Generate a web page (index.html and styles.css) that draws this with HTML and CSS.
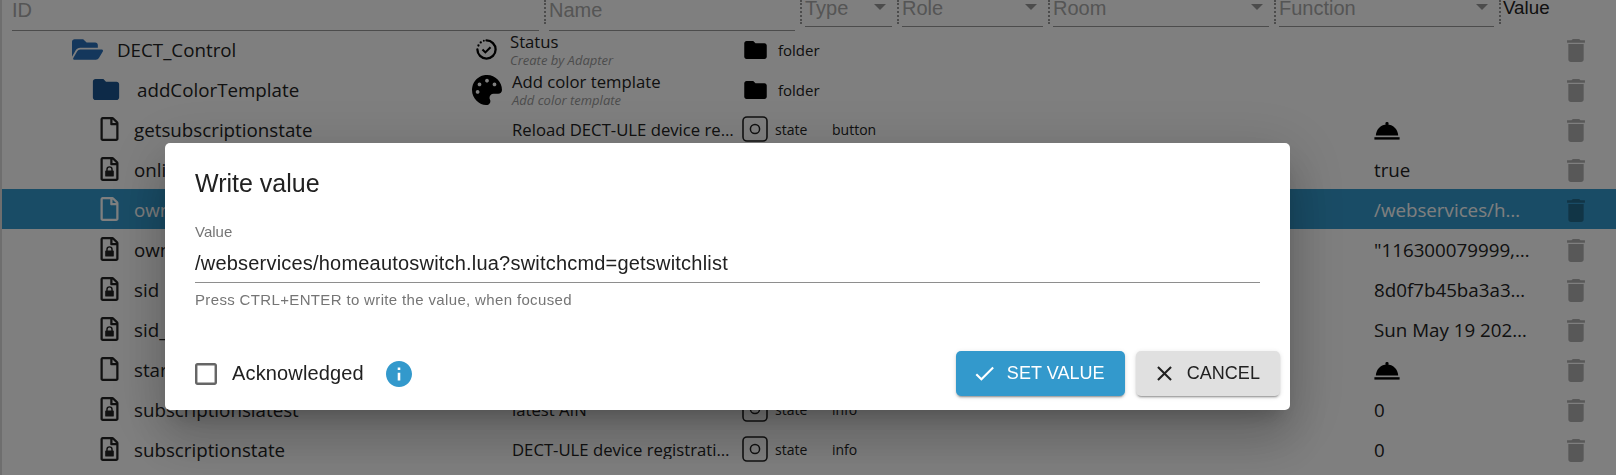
FILE: index.html
```html
<!DOCTYPE html>
<html lang="en">
<head>
<meta charset="UTF-8">
<title>Objects</title>
<link rel="stylesheet" href="styles.css">
</head>
<body>

<svg class="defs" xmlns="http://www.w3.org/2000/svg">
	<symbol id="i-folder" viewBox="2 4 20 16"><path d="M10 4H4c-1.1 0-1.99.9-1.99 2L2 18c0 1.1.9 2 2 2h16c1.1 0 2-.9 2-2V8c0-1.1-.9-2-2-2h-8l-2-2z"/></symbol>
	<symbol id="i-folder-open" viewBox="0 64 576 384"><path d="M572.694 292.093L500.27 416.248A63.997 63.997 0 0 1 444.989 448H45.025c-18.523 0-30.064-20.093-20.731-36.093l72.424-124.155A64 64 0 0 1 152 256h399.964c18.523 0 30.064 20.093 20.73 36.093zM152 224h328v-48c0-26.51-21.49-48-48-48H272l-64-64H48C21.49 64 0 85.49 0 112v278.046l69.077-118.418C86.214 242.25 117.989 224 152 224z"/></symbol>
	<symbol id="i-file" viewBox="0 0 384 512"><path d="M369.9 97.9L286 14C277 5 264.8-.1 252.1-.1H48C21.5 0 0 21.5 0 48v416c0 26.5 21.5 48 48 48h288c26.5 0 48-21.5 48-48V131.9c0-12.7-5.1-25-14.1-34zM332.1 128H256V51.9l76.1 76.1zM48 464V48h160v104c0 13.3 10.7 24 24 24h104v288H48z"/></symbol>
	<symbol id="i-file-lock" viewBox="0 0 384 512">
		<path d="M369.9 97.9L286 14C277 5 264.8-.1 252.1-.1H48C21.5 0 0 21.5 0 48v416c0 26.5 21.5 48 48 48h288c26.5 0 48-21.5 48-48V131.9c0-12.7-5.1-25-14.1-34zM332.1 128H256V51.9l76.1 76.1zM48 464V48h160v104c0 13.3 10.7 24 24 24h104v288H48z"/>
		<rect x="100" y="290" width="184" height="128" rx="18"/>
		<path d="M138 300v-36a54 54 0 0 1 108 0v36" fill="none" stroke="currentColor" stroke-width="30"/>
	</symbol>
	<symbol id="i-trash" viewBox="5 3 14 18"><path d="M6 19c0 1.1.9 2 2 2h8c1.1 0 2-.9 2-2V7H6v12zM19 4h-3.5l-1-1h-5l-1 1H5v2h14V4z"/></symbol>
	<symbol id="i-bell" viewBox="0 0 26 18">
		<rect x="11.4" y="0" width="3.2" height="3.5" rx="1.4"/>
		<path d="M1.8 13.6C2 7.2 7 2.4 13 2.4s11 4.8 11.2 11.2z"/>
		<rect x="0.4" y="15.2" width="25.2" height="2.4"/>
	</symbol>
	<symbol id="i-state" viewBox="0 0 26 26">
		<rect x="1" y="1" width="24" height="24" rx="4" fill="none" stroke="currentColor" stroke-width="1.6"/>
		<circle cx="13" cy="13" r="4.6" fill="none" stroke="currentColor" stroke-width="1.5"/>
	</symbol>
</svg>

<div class="page">
	<div class="head">
		<div class="hcell tall"><div class="field">ID</div></div>
		<div class="hcell tall"><div class="field">Name</div></div>
		<div class="hcell"><div class="field">Type<span class="arrow"></span></div></div>
		<div class="hcell"><div class="field">Role<span class="arrow"></span></div></div>
		<div class="hcell"><div class="field">Room<span class="arrow"></span></div></div>
		<div class="hcell"><div class="field">Function<span class="arrow"></span></div></div>
		<div class="hvalue">Value</div>
	</div>

	<div class="row">
		<div class="id lv1"><svg class="ic-open"><use href="#i-folder-open"/></svg><span>DECT_Control</span></div>
		<div class="name">
			<svg class="ic-name" viewBox="0 0 24 24">
				<path d="M12 2.5a9.5 9.5 0 1 1-9.5 9.5" fill="none" stroke="currentColor" stroke-width="2.4" stroke-linecap="round"/>
				<circle cx="3.6" cy="7.8" r="1.2"/><circle cx="6" cy="4.6" r="1.2"/><circle cx="9.2" cy="2.8" r="1"/>
				<path d="M7.8 12l3 3 5.4-5.4" fill="none" stroke="currentColor" stroke-width="2.2"/>
			</svg>
			<div class="two"><div>Status</div><div class="sub">Create by Adapter</div></div>
		</div>
		<div class="type"><svg class="ic-type"><use href="#i-folder"/></svg><span class="folder-t">folder</span></div>
		<div></div><div></div>
		<svg class="trash"><use href="#i-trash"/></svg>
	</div>

	<div class="row">
		<div class="id lv2"><svg class="ic-folder"><use href="#i-folder"/></svg><span>addColorTemplate</span></div>
		<div class="name">
			<svg class="ic-palette" viewBox="0 0 512 512"><path fill-rule="evenodd" d="M204.3 5C104.9 24.4 24.8 104.3 5.2 203.4c-37 187 131.7 326.4 258.8 306.7 41.2-6.4 61.4-54.6 42.5-91.7-23.1-45.4 9.9-98.4 60.9-98.4h79.7c35.8 0 64.8-29.6 64.9-65.3C511.5 97.1 368.1-26.9 204.3 5zM96 320c-17.7 0-32-14.3-32-32s14.3-32 32-32 32 14.3 32 32-14.3 32-32 32zm32-128c-17.7 0-32-14.3-32-32s14.3-32 32-32 32 14.3 32 32-14.3 32-32 32zm128-64c-17.7 0-32-14.3-32-32s14.3-32 32-32 32 14.3 32 32-14.3 32-32 32zm128 64c-17.7 0-32-14.3-32-32s14.3-32 32-32 32 14.3 32 32-14.3 32-32 32z"/></svg>
			<div class="two"><div>Add color template</div><div class="sub">Add color template</div></div>
		</div>
		<div class="type"><svg class="ic-type"><use href="#i-folder"/></svg><span class="folder-t">folder</span></div>
		<div></div><div></div>
		<svg class="trash"><use href="#i-trash"/></svg>
	</div>

	<div class="row">
		<div class="id lv3"><svg class="ic-file"><use href="#i-file"/></svg><span>getsubscriptionstate</span></div>
		<div class="name"><span class="ntext">Reload DECT-ULE device registration</span></div>
		<div class="type"><svg class="ic-state"><use href="#i-state"/></svg>state</div>
		<div class="role">button</div>
		<div class="value"><svg class="ic-bell"><use href="#i-bell"/></svg></div>
		<svg class="trash"><use href="#i-trash"/></svg>
	</div>

	<div class="row">
		<div class="id lv3"><svg class="ic-file"><use href="#i-file-lock"/></svg><span>online</span></div>
		<div class="name"></div><div class="type"></div><div class="role"></div>
		<div class="value">true</div>
		<svg class="trash"><use href="#i-trash"/></svg>
	</div>

	<div class="row selected">
		<div class="id lv3"><svg class="ic-file"><use href="#i-file"/></svg><span>own</span></div>
		<div class="name"></div><div class="type"></div><div class="role"></div>
		<div class="value">/webservices/homeautoswitch.lua</div>
		<svg class="trash"><use href="#i-trash"/></svg>
	</div>

	<div class="row">
		<div class="id lv3"><svg class="ic-file"><use href="#i-file-lock"/></svg><span>own</span></div>
		<div class="name"></div><div class="type"></div><div class="role"></div>
		<div class="value">"116300079999,116300079998"</div>
		<svg class="trash"><use href="#i-trash"/></svg>
	</div>

	<div class="row">
		<div class="id lv3"><svg class="ic-file"><use href="#i-file-lock"/></svg><span>sid</span></div>
		<div class="name"></div><div class="type"></div><div class="role"></div>
		<div class="value">8d0f7b45ba3a3c1e</div>
		<svg class="trash"><use href="#i-trash"/></svg>
	</div>

	<div class="row">
		<div class="id lv3"><svg class="ic-file"><use href="#i-file-lock"/></svg><span>sid_</span></div>
		<div class="name"></div><div class="type"></div><div class="role"></div>
		<div class="value">Sun May 19 2024 12:00:00</div>
		<svg class="trash"><use href="#i-trash"/></svg>
	</div>

	<div class="row">
		<div class="id lv3"><svg class="ic-file"><use href="#i-file"/></svg><span>start</span></div>
		<div class="name"></div><div class="type"></div><div class="role"></div>
		<div class="value"><svg class="ic-bell"><use href="#i-bell"/></svg></div>
		<svg class="trash"><use href="#i-trash"/></svg>
	</div>

	<div class="row">
		<div class="id lv3"><svg class="ic-file"><use href="#i-file-lock"/></svg><span>subscriptionslatest</span></div>
		<div class="name"><span class="ntext">latest AIN</span></div>
		<div class="type"><svg class="ic-state"><use href="#i-state"/></svg>state</div>
		<div class="role">info</div>
		<div class="value">0</div>
		<svg class="trash"><use href="#i-trash"/></svg>
	</div>

	<div class="row">
		<div class="id lv3"><svg class="ic-file"><use href="#i-file-lock"/></svg><span>subscriptionstate</span></div>
		<div class="name"><span class="ntext">DECT-ULE device registration state</span></div>
		<div class="type"><svg class="ic-state"><use href="#i-state"/></svg>state</div>
		<div class="role">info</div>
		<div class="value">0</div>
		<svg class="trash"><use href="#i-trash"/></svg>
	</div>
</div>

<div class="backdrop">
	<div class="dialog">
		<h2 class="title">Write value</h2>
		<div class="content">
			<div class="label">Value</div>
			<div class="input">/webservices/homeautoswitch.lua?switchcmd=getswitchlist</div>
			<div class="helper">Press CTRL+ENTER to write the value, when focused</div>
		</div>
		<div class="actions">
			<div class="ack">
				<svg class="check" viewBox="3 3 18 18"><path d="M19 5v14H5V5h14m0-2H5c-1.1 0-2 .9-2 2v14c0 1.1.9 2 2 2h14c1.1 0 2-.9 2-2V5c0-1.1-.9-2-2-2z"/></svg>
				<span class="ack-text">Acknowledged</span>
				<svg class="info" viewBox="2 2 20 20"><path d="M12 2C6.48 2 2 6.48 2 12s4.48 10 10 10 10-4.48 10-10S17.52 2 12 2zm1 15h-2v-6h2v6zm0-8h-2V7h2v2z"/></svg>
			</div>
			<div class="buttons">
				<div class="btn primary"><svg viewBox="0 0 24 24"><path d="M9 16.17L4.83 12l-1.42 1.41L9 19 21 7l-1.41-1.41z"/></svg>Set value</div>
				<div class="btn"><svg viewBox="0 0 24 24"><path d="M19 6.41L17.59 5 12 10.59 6.41 5 5 6.41 10.59 12 5 17.59 6.41 19 12 13.41 17.59 19 19 17.59 13.41 12z"/></svg>Cancel</div>
			</div>
		</div>
	</div>
</div>

</body>
</html>
```
FILE: styles.css
```css
*{
	margin: 0;
	padding: 0;
	box-sizing: border-box;
}
html,body{
	width: 100%;
	height: 100%;
	overflow: hidden;
}
body{
	color: #222;
	background-color: #fff;
	font-family: "Open Sans", "Noto Sans", sans-serif;
}
svg{
	fill: currentColor;
	flex: none;
}
.defs{
	display: none;
}

.page{
	height: 100%;
	border-left: 2px solid #ddd;
}

/* filter header */
.head{
	display: grid;
	grid-template-columns: 534px 256px 97px 151px 226px 225px 1fr;
	height: 29px;
	padding-left: 10px;
	font-family: "Liberation Sans", sans-serif;
	font-size: 20px;
	color: #aaa;
}
.hcell{
	height: 24px;
	padding: 0 5px 0 3px;
	border-right: 2px dotted #999;
}
.hcell:first-child{
	padding-left: 0;
}
.field{
	position: relative;
	height: 27px;
	line-height: 17px;
	border-bottom: 1px solid #999;
}
.tall .field{
	height: 31px;
	line-height: 21px;
}
.arrow{
	position: absolute;
	right: 6px;
	top: 4px;
	border: 6px solid transparent;
	border-top: 6px solid #999;
	border-bottom: 0;
}
.hvalue{
	padding-left: 2px;
	color: #222;
	font-size: 18.75px;
	line-height: 16px;
}

/* object rows */
.row{
	display: grid;
	grid-template-columns: 468px 272px 90px 542px 180px 42px;
	align-items: center;
	height: 40px;
	font-size: 18.75px;
}
.row.selected{
	color: #fff;
	background-color: #3399cc;
}
.id{
	display: flex;
	align-items: center;
	white-space: nowrap;
}
.lv1{
	padding-left: 70px;
	gap: 14px;
}
.lv2{
	padding-left: 90px;
	gap: 17px;
}
.lv3{
	padding-left: 98px;
	gap: 15px;
}
.ic-open{
	width: 31px;
	height: 21px;
	color: #286eb8;
}
.ic-folder{
	width: 28px;
	height: 21px;
	color: #1a5590;
}
.ic-file{
	width: 19px;
	height: 24px;
}
.name{
	display: flex;
	align-items: center;
	min-width: 0;
	padding-left: 5px;
	gap: 12px;
	line-height: 19px;
	font-size: 16.7px;
}
.two{
	padding-top: 3px;
}
.ic-name{
	width: 23px;
	height: 23px;
	color: #000;
}
.ic-palette{
	width: 30px;
	height: 30px;
	margin-left: -3px;
	margin-right: -2px;
	color: #000;
}
.sub{
	font-size: 13px;
	font-style: italic;
	color: #999;
}
.ntext{
	padding-left: 37px;
	width: 262px;
	overflow: hidden;
	white-space: nowrap;
	text-overflow: ellipsis;
}
.type{
	display: flex;
	align-items: center;
	gap: 10px;
	padding-left: 1px;
	font-size: 14px;
}
.folder-t{
	font-size: 15px;
}
.ic-type{
	width: 25px;
	height: 18px;
	color: #000;
}
.ic-state{
	width: 26px;
	height: 26px;
	margin-right: -3px;
	margin-left: -1px;
}
.role{
	font-size: 14px;
}
.value{
	width: 158px;
	white-space: nowrap;
	overflow: hidden;
	text-overflow: ellipsis;
}
.selected .value{
	width: 152px;
}
.ic-bell{
	display: block;
	width: 26px;
	height: 18px;
	margin-top: 3px;
	color: #000;
}
.trash{
	width: 18px;
	height: 23px;
	margin: 2px 0 0 13px;
	color: #000;
	opacity: 0.3;
}

/* write value dialog */
.backdrop{
	position: fixed;
	top: 0;
	left: 0;
	right: 0;
	bottom: 0;
	display: flex;
	align-items: flex-start;
	padding: 143px 0 0 165px;
	background-color: rgba(0,0,0,0.5);
	font-family: "Liberation Sans", sans-serif;
}
.dialog{
	width: 1125px;
	height: 267px;
	display: flex;
	flex-direction: column;
	background-color: #fff;
	border-radius: 5px;
	box-shadow: 0 14px 19px -9px rgba(0,0,0,0.2), 0 30px 48px 4px rgba(0,0,0,0.14), 0 11px 58px 10px rgba(0,0,0,0.12);
}
.title{
	padding: 20px 30px 0;
	font-size: 25px;
	font-weight: 400;
	line-height: 40px;
	color: #212121;
}
.content{
	flex: 1;
	padding: 20px 30px 0;
}
.label{
	font-size: 15px;
	line-height: 18px;
	color: #757575;
}
.input{
	height: 42px;
	padding-top: 10px;
	font-size: 20px;
	line-height: 24px;
	letter-spacing: 0.2px;
	color: #212121;
	border-bottom: 1px solid #8e8e8e;
}
.helper{
	margin-top: 8px;
	font-size: 15px;
	line-height: 18px;
	letter-spacing: 0.35px;
	color: #757575;
}
.actions{
	display: flex;
	align-items: center;
	justify-content: space-between;
	padding: 0 10px 14px 30px;
}
.ack{
	display: flex;
	align-items: center;
}
.check{
	width: 22px;
	height: 22px;
	color: #666;
}
.ack-text{
	margin: 0 22px 0 15px;
	font-size: 20px;
	letter-spacing: 0.15px;
	color: #212121;
}
.info{
	width: 26px;
	height: 26px;
	color: #3399cc;
}
.buttons{
	display: flex;
	gap: 11px;
}
.btn{
	display: flex;
	align-items: center;
	height: 45px;
	padding: 0 20px 0 16px;
	gap: 10px;
	border-radius: 5px;
	font-size: 18px;
	letter-spacing: 0.05px;
	text-transform: uppercase;
	color: #212121;
	background-color: #e0e0e0;
	box-shadow: 0 3px 1px -2px rgba(0,0,0,0.2), 0 2px 2px 0 rgba(0,0,0,0.14), 0 1px 5px 0 rgba(0,0,0,0.12);
}
.btn svg{
	width: 25px;
	height: 25px;
}
.btn.primary{
	color: #fff;
	background-color: #3399cc;
}
```
